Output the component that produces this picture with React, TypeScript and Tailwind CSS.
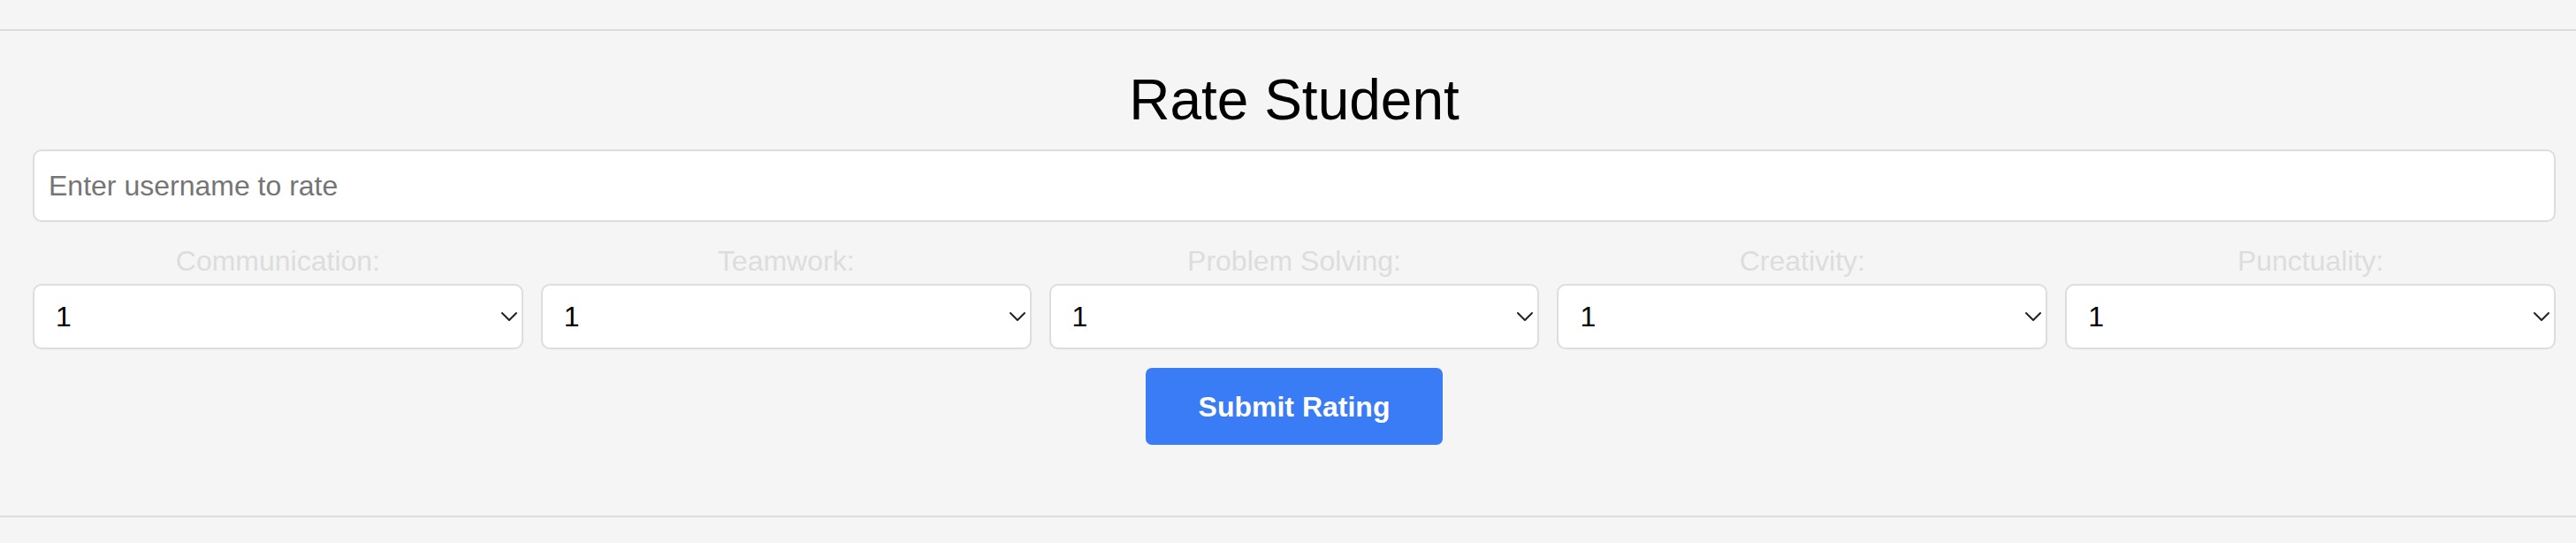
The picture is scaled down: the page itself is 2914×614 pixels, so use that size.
import { ChevronDown } from "lucide-react";

const CRITERIA = ["Communication:", "Teamwork:", "Problem Solving:", "Creativity:", "Punctuality:"];

const App = () => {
  return (
    <div className="min-h-screen bg-[#f5f5f5] pt-[33px] font-['Liberation_Sans',Arial,sans-serif]">
      <div className="border-y-2 border-[#dddddd] pl-[37px] pr-[23px] pt-[43px] pb-[80px]">
        <h1 className="text-center text-[64px] leading-[71px] text-black">Rate Student</h1>

        <input
          type="text"
          placeholder="Enter username to rate"
          className="mt-[20px] block h-[82px] w-full rounded-[10px] border-2 border-[#dddddd] bg-white px-[16px] text-[32px] text-black placeholder:text-[#757575] outline-none"
        />

        <div className="mt-[26px] grid grid-cols-5 gap-x-[20px]">
          {CRITERIA.map((label) => (
            <div key={label} className="flex flex-col">
              <label className="text-center text-[32px] leading-[36px] text-[#dddddd]">{label}</label>
              <div className="relative mt-[8px]">
                <select className="block h-[74px] w-full appearance-none rounded-[10px] border-2 border-[#dddddd] bg-white pl-[24px] text-[32px] text-black outline-none">
                  {[1, 2, 3, 4, 5].map((n) => (
                    <option key={n}>{n}</option>
                  ))}
                </select>
                <ChevronDown
                  size={32}
                  strokeWidth={1.5}
                  className="pointer-events-none absolute right-0 top-1/2 -translate-y-1/2 text-[#222]"
                />
              </div>
            </div>
          ))}
        </div>

        <div className="mt-[21px] flex justify-center">
          <button className="h-[87px] w-[336px] rounded-[7px] bg-[#3a7bf6] text-[32px] font-bold text-white">
            Submit Rating
          </button>
        </div>
      </div>
    </div>
  );
};

export default App;
